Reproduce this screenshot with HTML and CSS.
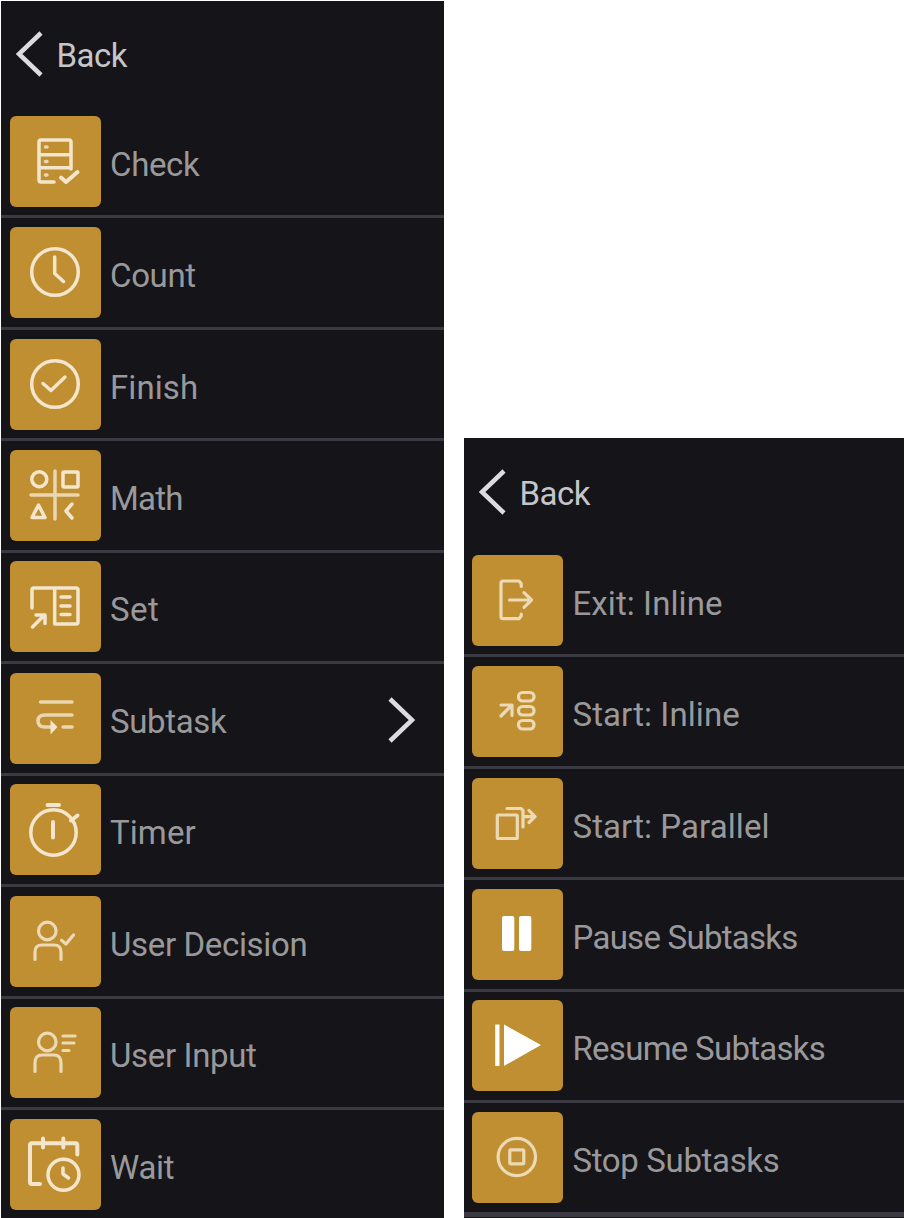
FILE: index.html
```html
<!DOCTYPE html>
<html lang="en">
<head>
<meta charset="utf-8">
<title>Task blocks</title>
<link rel="stylesheet" href="styles.css">
</head>
<body>
<main class="menus">
  <section class="panel panel-main">
    <header class="back"><svg class="chevron" viewBox="0 0 28 48"><path d="M25 3 3 24 25 45"/></svg><span>Back</span></header>
    <ul class="list">
      <li class="row"><svg class="tile" viewBox="0 0 91 91"><path d="M44 66H31Q29 66 29 64V26Q29 24 31 24H59Q61 24 61 26V53M29 38.7H60M29 51.7H60"/><path class="faint" d="M35.5 31H37M35.5 45.5H37M35.5 59H37"/><path class="bold" d="M51 61.5 56 66 67.5 56"/></svg><span class="label">Check</span></li>
      <li class="row"><svg class="tile" viewBox="0 0 91 91"><circle cx="45" cy="45" r="23.3"/><path d="M44.7 30V46.5L53.5 54.5"/></svg><span class="label">Count</span></li>
      <li class="row"><svg class="tile" viewBox="0 0 91 91"><circle cx="45" cy="45" r="23.3"/><path d="M33 44.5 41 51.5 55 38"/></svg><span class="label wide">Finish</span></li>
      <li class="row"><svg class="tile" viewBox="0 0 91 91"><circle cx="29.3" cy="29.3" r="7.5"/><rect x="53" y="22" width="15" height="15" rx="1"/><path class="faint" d="M45 21V69M21 45H68"/><path d="M28.5 55 35 67.5H22ZM62 54 56 61 62 68"/></svg><span class="label tight">Math</span></li>
      <li class="row"><svg class="tile" viewBox="0 0 91 91"><path d="M22 47V29Q22 27 24 27H66Q68 27 68 29V61Q68 63 66 63H44.7V27M51 36H60M51 45H60M51 53.5H60M22.5 66 34 54.5M26 54H35V62.5"/></svg><span class="label wider">Set</span></li>
      <li class="row"><svg class="tile" viewBox="0 0 91 91"><path class="faint" d="M30.5 29H62M62 42H35Q28 42 28 48T35 54H44M53 54H62"/><path class="solid" d="M40.5 47 47.5 54 40.5 61.5Z"/></svg><span class="label">Subtask</span><svg class="chevron more" viewBox="0 0 28 48"><path d="M3 3 25 24 3 45"/></svg></li>
      <li class="row"><svg class="tile" viewBox="0 0 91 91"><circle cx="43.5" cy="48.5" r="22.7"/><path class="bold" d="M37.5 21H49M43 38V53.5M61 36.5 67.5 31.5"/></svg><span class="label wide">Timer</span></li>
      <li class="row"><svg class="tile thin" viewBox="0 0 91 91"><circle cx="37.3" cy="35" r="8.8"/><path d="M25 63.5V56Q25 49 32 49H44Q51 49 51 56V63.5M51.5 44.3 56 48 63.5 39"/></svg><span class="label">User Decision</span></li>
      <li class="row"><svg class="tile thin" viewBox="0 0 91 91"><circle cx="37.3" cy="35" r="8.8"/><path d="M25 64.5V56Q25 48 32 48H44Q51 48 51 56V64.5M53 29H65M53 36H64M53 43.5H59"/></svg><span class="label">User Input</span></li>
      <li class="row"><svg class="tile" viewBox="0 0 91 91"><path class="bold" d="M30 65H22Q20 65 20 63V26.3Q20 24.3 22 24.3H65.3Q67.3 24.3 67.3 26.3V35.5M33 19.5V28.5M53.3 19.5V28.5"/><circle cx="53.5" cy="55.7" r="15.5"/><path d="M53 49V55L58.5 59"/></svg><span class="label">Wait</span></li>
    </ul>
  </section>
  <section class="panel panel-sub">
    <header class="back"><svg class="chevron" viewBox="0 0 28 48"><path d="M25 3 3 24 25 45"/></svg><span>Back</span></header>
    <ul class="list">
      <li class="row"><svg class="tile thin" viewBox="0 0 91 91"><path d="M49.2 31.5V28.5L47 26H31Q29 26 29 28V61.7Q29 63.7 31 63.7H47L49.2 61V59M37.5 45H59M52 37.7 59.5 45 52 52.3"/></svg><span class="label wide">Exit: Inline</span></li>
      <li class="row"><svg class="tile thin" viewBox="0 0 91 91"><rect x="46.5" y="26.5" width="15.5" height="8.5" rx="4"/><rect x="46.5" y="40.5" width="15.5" height="8.5" rx="4"/><rect x="46.5" y="54.5" width="15.5" height="8.5" rx="4"/><path d="M29 50 39 40M29 39H40V49.5"/></svg><span class="label wide">Start: Inline</span></li>
      <li class="row"><svg class="tile thin" viewBox="0 0 91 91"><rect x="25.3" y="37" width="20" height="23.5" rx="1"/><path d="M35 30.5H49L51 32.5V49M51 38.7H62M57 32.5 63 38.7 57 44.5"/></svg><span class="label wide">Start: Parallel</span></li>
      <li class="row"><svg class="tile filled" viewBox="0 0 91 91"><rect x="30" y="27" width="12.3" height="35" rx="2"/><rect x="47" y="27" width="12.3" height="35" rx="2"/></svg><span class="label tight">Pause Subtasks</span></li>
      <li class="row"><svg class="tile filled" viewBox="0 0 91 91"><rect x="23.2" y="24.5" width="4.3" height="41.5"/><path d="M32 24.5 69 45 32 66Z"/></svg><span class="label tight">Resume Subtasks</span></li>
      <li class="row"><svg class="tile thin" viewBox="0 0 91 91"><circle cx="44.8" cy="45" r="18.7"/><rect x="37.8" y="37.8" width="14" height="14" rx="1"/></svg><span class="label">Stop Subtasks</span></li>
    </ul>
  </section>
</main>
</body>
</html>
```
FILE: styles.css
```css
* { box-sizing: border-box; }
body { margin: 0; background: #fff; font-family: Roboto, "Liberation Sans", sans-serif; }
.menus { display: flex; align-items: flex-start; gap: 20.5px; width: 904px; height: 1218px; padding: 1px 0 0 1px; overflow: hidden; }
.panel { background: #151418; height: 1217px; overflow: hidden; }
.panel-main { width: 442.5px; }
.panel-sub { flex: 1; height: 780px; margin-top: 437px; }
.back { display: flex; align-items: center; height: 106px; padding: 0 0 0 14.5px; color: #c6c6c9; font-size: 33px; letter-spacing: -0.5px; }
.panel-sub .back { height: 108px; }
.back span { margin-left: 13px; line-height: 40px; padding-top: 3px; }
.chevron { width: 28px; height: 48px; fill: none; stroke: #dcdcde; stroke-width: 4.5; }
.list { list-style: none; margin: 0; padding: 0; }
.row { display: flex; align-items: center; height: 111.45px; padding: 0 29px 0 8.5px; border-bottom: 3px solid #3b3942; }
.panel-sub .row { padding: 0 0 0 8px; }
.panel-sub .row:last-child { border-bottom-width: 5px; height: 114px; }
.tile { flex: none; width: 91px; height: 91px; border-radius: 6px; background: #bf8f31; fill: none; stroke: #f3e6cd; stroke-width: 3.5; stroke-linecap: round; stroke-linejoin: round; }
.thin { stroke: #ecdab7; stroke-width: 3.2; }
.faint { stroke: #ead6b0; }
.bold { stroke-width: 4; }
.solid { fill: #f3e6cd; stroke: none; }
.filled { fill: #fff; stroke: none; }
.label { flex: 1; margin-left: 9.5px; padding-top: 7px; color: #99999b; font-size: 33px; line-height: 40px; letter-spacing: -0.35px; white-space: nowrap; }
.wide { letter-spacing: 0.08px; }
.wider { letter-spacing: 0.5px; }
.tight { letter-spacing: -0.73px; }
.more { flex: none; margin-top: 3px; }
```
